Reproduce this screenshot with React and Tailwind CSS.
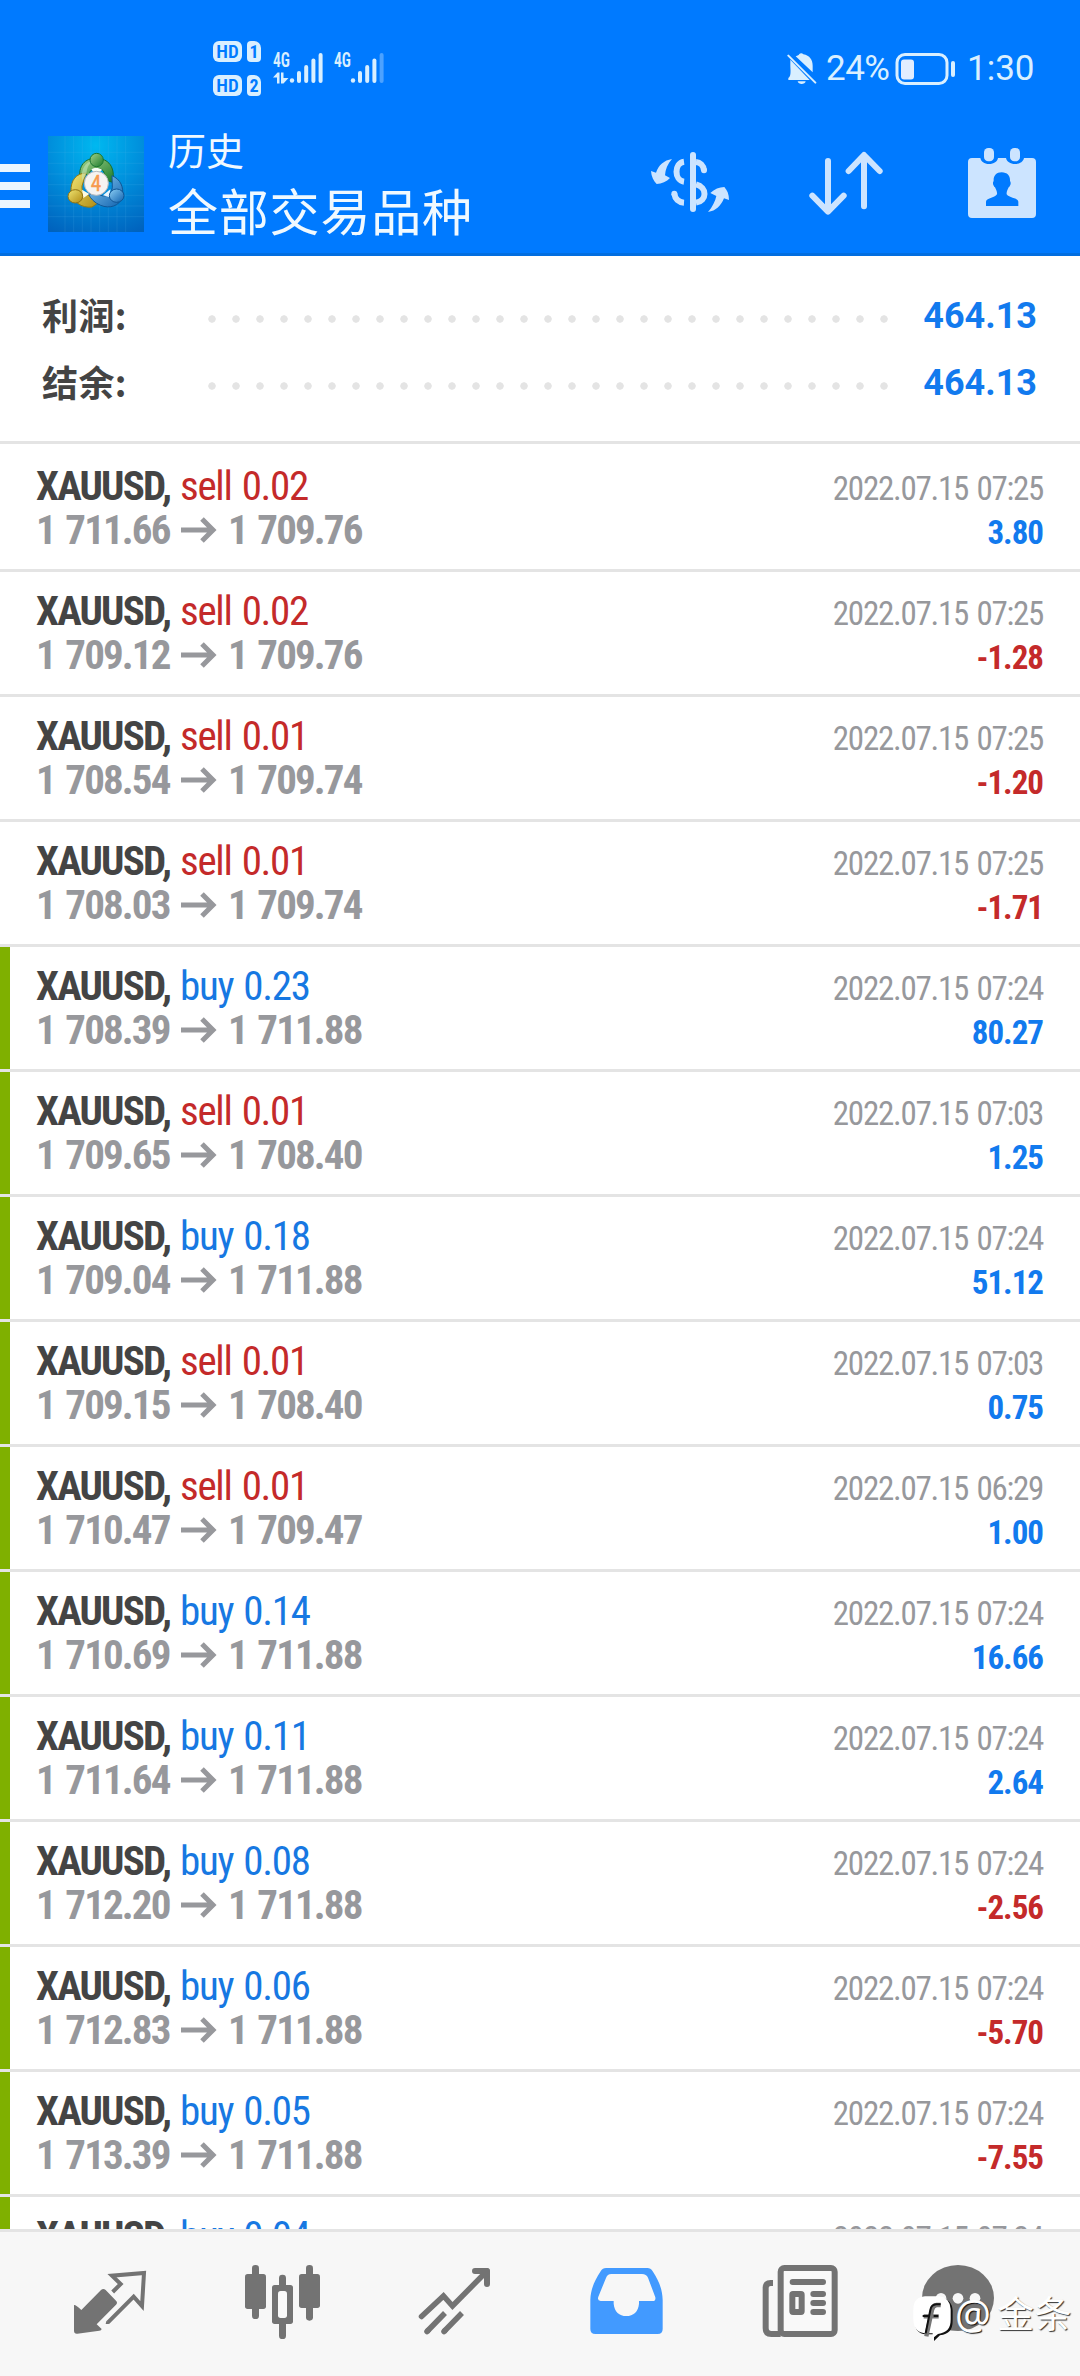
import React from 'react';

const trades = [
  { type: 'sell', lots: '0.02', open: '1 711.66', close: '1 709.76', time: '07:25', profit: '3.80' },
  { type: 'sell', lots: '0.02', open: '1 709.12', close: '1 709.76', time: '07:25', profit: '-1.28' },
  { type: 'sell', lots: '0.01', open: '1 708.54', close: '1 709.74', time: '07:25', profit: '-1.20' },
  { type: 'sell', lots: '0.01', open: '1 708.03', close: '1 709.74', time: '07:25', profit: '-1.71' },
  { type: 'buy', lots: '0.23', open: '1 708.39', close: '1 711.88', time: '07:24', profit: '80.27', tp: true },
  { type: 'sell', lots: '0.01', open: '1 709.65', close: '1 708.40', time: '07:03', profit: '1.25', tp: true },
  { type: 'buy', lots: '0.18', open: '1 709.04', close: '1 711.88', time: '07:24', profit: '51.12', tp: true },
  { type: 'sell', lots: '0.01', open: '1 709.15', close: '1 708.40', time: '07:03', profit: '0.75', tp: true },
  { type: 'sell', lots: '0.01', open: '1 710.47', close: '1 709.47', time: '06:29', profit: '1.00', tp: true },
  { type: 'buy', lots: '0.14', open: '1 710.69', close: '1 711.88', time: '07:24', profit: '16.66', tp: true },
  { type: 'buy', lots: '0.11', open: '1 711.64', close: '1 711.88', time: '07:24', profit: '2.64', tp: true },
  { type: 'buy', lots: '0.08', open: '1 712.20', close: '1 711.88', time: '07:24', profit: '-2.56', tp: true },
  { type: 'buy', lots: '0.06', open: '1 712.83', close: '1 711.88', time: '07:24', profit: '-5.70', tp: true },
  { type: 'buy', lots: '0.05', open: '1 713.39', close: '1 711.88', time: '07:24', profit: '-7.55', tp: true },
  { type: 'buy', lots: '0.04', open: '1 713.90', close: '1 711.88', time: '07:24', profit: '-8.08', tp: true },
];

const SimBadge = ({ n }) => (
  <div className="flex gap-[5px] h-[21px]">
    <span className="w-[29px] rounded-[6px] bg-[#d9efff] text-[#007aff] text-[19px] leading-[21px] font-semibold text-center font-['Roboto_Condensed',sans-serif]">
      HD
    </span>
    <span className="w-[14px] rounded-[4px] rounded-tr-[7px] bg-[#d9efff] text-[#007aff] text-[18px] leading-[21px] font-bold text-center font-['Roboto_Condensed',sans-serif]">
      {n}
    </span>
  </div>
);

const Signal = ({ data, weak }) => (
  <svg className="w-[52px] h-[34px] overflow-visible" viewBox="0 0 52 34" fill="#d9efff">
    <text x="0" y="15" fontSize="19.5" fontWeight="600" textLength="17" lengthAdjust="spacingAndGlyphs" fontFamily="Roboto Condensed">4G</text>
    {data && <path d="M0 25.500L4.500 20.500H6.500V31.500H4V25.500ZM8 20.500H10.500V26H15.500L10.500 31.500H8Z" />}
    <circle cx="19" cy="28.500" r="2.200" />
    <rect x="24" y="19" width="4" height="12" rx="2" />
    <rect x="31.200" y="13" width="4" height="18" rx="2" />
    <rect x="38.400" y="6.500" width="4" height="24.500" rx="2" />
    <rect x="45.600" y="1" width="4" height="30" rx="2" opacity={weak ? 0.35 : 1} />
  </svg>
);

const StatusBar = () => (
  <div className="h-[112px] pt-[40px] pl-[213px] pr-[48px] flex items-start">
    <div className="flex flex-col gap-[13px] pt-[1px]">
      <SimBadge n="1" />
      <SimBadge n="2" />
    </div>
    <div className="flex gap-[9px] ml-[12px] mt-[12px]">
      <Signal data />
      <Signal weak />
    </div>
    <div className="ml-auto mt-[1px] flex items-center h-[56px] text-[#d9efff] text-[35px] font-['Roboto',sans-serif]">
      <svg className="w-[30px] h-[32px] mr-[9px]" viewBox="82 66 90 96" fill="currentColor">
        <path d="M92 86L150 147H86V141C94 137 93 122 92 106Z" />
        <path d="M108 76C114 74 118 72 119 69C122 66 128 66 131 70C150 74 159 86 159 104V124Z" />
        <path d="M114 151H138C136 162 116 162 114 151Z" />
        <path d="M86 74L167 155" stroke="currentColor" strokeWidth="6" strokeLinecap="round" />
      </svg>
      <span className="w-[64px] mt-[1px] tracking-[-0.5px]">24%</span>
      <svg className="w-[61px] h-[34px] ml-[5px]" viewBox="0 0 61 34" fill="none">
        <rect x="2" y="2.500" width="50" height="29" rx="8" stroke="#d9efff" strokeWidth="3" />
        <rect x="6" y="7.500" width="13" height="20" rx="3" fill="#e2edff" />
        <rect x="56" y="9" width="4" height="16" rx="2" fill="#d9efff" />
      </svg>
      <span className="w-[65px] mt-[1px] ml-[11px]">1:30</span>
    </div>
  </div>
);

const AppLogo = () => (
  <svg className="w-24 h-24 ml-[18px]" viewBox="0 0 288 288">
    <defs>
      <radialGradient id="sky" cx=".5" cy=".1" r="1">
        <stop offset="0" stopColor="#00b8f0" />
        <stop offset=".5" stopColor="#008ddb" />
        <stop offset="1" stopColor="#0062bd" />
      </radialGradient>
      <linearGradient id="green" x2="1" y2="1">
        <stop offset="0" stopColor="#a5d38b" />
        <stop offset="1" stopColor="#197a2a" />
      </linearGradient>
      <linearGradient id="gold" x2="1" y2="1">
        <stop offset="0" stopColor="#efe573" />
        <stop offset="1" stopColor="#b08a12" />
      </linearGradient>
      <linearGradient id="blue" x2="1" y2="1">
        <stop offset="0" stopColor="#8ed0f5" />
        <stop offset="1" stopColor="#0e60ae" />
      </linearGradient>
    </defs>
    <rect width="288" height="288" fill="url(#sky)" />
    <path
      d="M51 0V288M77 0V288M103 0V288M129 0V288M155 0V288M181 0V288M207 0V288M233 0V288M0 49H288M0 82H288M0 114H288M0 146H288M0 178H288M0 210H288M0 242H288"
      stroke="#6cc5f3"
      strokeOpacity=".2"
      strokeWidth="2"
    />
    <g strokeWidth="3">
      <path d="M97 134C88 88 112 66 145 67C181 67 203 93 194 139L165 130C174 105 165 98 145 98C126 98 122 109 127 126L111 112Z" fill="url(#green)" stroke="#176f2b" />
      <path d="M114 111C84 112 68 133 69 166C73 197 100 217 132 213L150 201L132 173C116 184 100 172 102 150Z" fill="url(#gold)" stroke="#987a0f" />
      <path d="M192 119C218 130 228 154 223 181C216 211 184 219 158 208C140 201 128 188 121 174L151 173C166 187 190 179 193 155Z" fill="url(#blue)" stroke="#105796" />
      <path d="M102 134C98 98 113 78 132 76C112 96 119 109 112 120Z" fill="#c5e6b7" opacity=".6" />
      <path d="M130 100C138 94 154 95 162 101L157 107H135Z" fill="#f5fff5" />
      <path d="M102 161L124 174L106 186Z" fill="#fffbe0" />
      <path d="M165 178L187 160L186 184Z" fill="#eaf6ff" />
      <circle cx="146" cy="72" r="20" fill="url(#green)" stroke="#1a7730" />
      <ellipse cx="82" cy="181" rx="22" ry="20" fill="url(#gold)" stroke="#8f7212" />
      <ellipse cx="206" cy="179" rx="22" ry="20" fill="url(#blue)" stroke="#0f5595" />
    </g>
    <circle cx="145" cy="142" r="36" fill="#f5f3f2" stroke="#b9b9bd" strokeWidth="3" />
    <text x="144" y="164" textAnchor="middle" fontSize="64" fontWeight="400" fill="#f79a50" stroke="#f79a50" strokeWidth="1" fontFamily="Roboto Condensed">4</text>
  </svg>
);

const Header = () => (
  <header className="h-[256px] shrink-0 bg-[#007aff] border-b-[3px] border-[#026ee0]">
    <StatusBar />
    <div className="h-[144px] flex items-center">
      <div className="w-[30px] flex flex-col gap-[10px] mt-[3px]">
        <div className="h-2 bg-[#ebf6ff]" />
        <div className="h-2 bg-[#ebf6ff]" />
        <div className="h-2 bg-[#ebf6ff]" />
      </div>
      <AppLogo />
      <div className="ml-[24px] -mt-[10px] text-[#f0f9ff] font-['Noto_Sans_CJK_SC',sans-serif]">
        <div className="text-[38px] leading-[60px]">历史</div>
        <div className="text-[50px] leading-[60px] tracking-[0.8px]">全部交易品种</div>
      </div>
      <div className="ml-auto mr-[38px] flex gap-[76px]">
        <svg className="w-20 h-20" viewBox="90 42 240 240" fill="#cce4ff">
          <path d="M219 75V237" stroke="#cce4ff" strokeWidth="18" strokeLinecap="round" />
          <path d="M192 95C162 99 162 151 192 155M163 191C165 207 176 217 192 218M228 96C240 97 250 106 252 121M228 163C262 172 262 212 228 218" fill="none" stroke="#cce4ff" strokeWidth="18" />
          <circle cx="163" cy="191" r="9" />
          <circle cx="252" cy="121" r="9" />
          <path d="M156 87C143 102 136 118 135 136L150 144C140 155 125 161 110 162C101 153 94 140 93 123L108 128C116 105 132 91 156 87Z" />
          <path d="M264 246C277 231 286 214 289 198L271 189C283 177 298 171 313 171C322 181 327 193 327 210L312 205C303 227 288 243 264 246Z" />
        </svg>
        <svg className="w-20 h-20" viewBox="558 42 240 240" fill="none" stroke="#cce4ff" strokeWidth="18" strokeLinecap="round" strokeLinejoin="round">
          <path d="M624 93V243M577 197L624 245L671 197" />
          <path d="M732 229V78M686 123L732 75L779 123" />
        </svg>
        <svg className="w-20 h-20" viewBox="1026 42 240 240" fill="#cce4ff">
          <path
            fillRule="evenodd"
            d="M1056 84H1081C1083 95 1093 102 1107 102C1122 102 1132 95 1134 84H1158C1160 95 1171 102 1185 102C1199 102 1210 95 1212 84H1236Q1248 84 1248 96V252Q1248 264 1236 264H1056Q1044 264 1044 252V96Q1044 84 1056 84ZM1145 127C1128 127 1120 139 1121 153C1116 160 1121 168 1125 172C1129 180 1132 187 1131 193C1124 205 1098 203 1098 216V228H1195V216C1195 203 1168 205 1160 193C1159 187 1162 180 1166 172C1170 168 1175 160 1170 153C1171 139 1163 127 1145 127Z"
          />
          <rect x="1092" y="54" width="30" height="40" rx="13" />
          <rect x="1170" y="54" width="30" height="40" rx="13" />
        </svg>
      </div>
    </div>
  </header>
);

const SummaryRow = ({ label, value }) => (
  <div className="h-[67px] leading-[67px] text-[36px] font-bold flex">
    <span className="w-[158px] -mt-[1px] text-[#444] tracking-[0.4px] font-['Noto_Sans_CJK_SC',sans-serif]">{label}:</span>
    <span className="w-[696px] h-2 mt-[33px] bg-[radial-gradient(circle,#e4e4e4_3.4px,transparent_4px)] bg-[length:24px_8px]" />
    <span className="ml-auto mt-[1px] text-[#127aee] font-['Roboto',sans-serif]">{value}</span>
  </div>
);

const TradeRow = ({ trade }) => {
  const lost = trade.profit.startsWith('-');
  return (
    <li
      className={`h-[125px] shrink-0 flex justify-between border-b-[3px] border-[#e4e4e4] pr-[37px] ${
        trade.tp ? 'bg-[linear-gradient(#7fb000,#7fb000)] bg-[length:10px_100%] bg-no-repeat' : ''
      }`}
    >
      <div className="pl-[36px] pt-[17px] text-[41px] leading-[44px] whitespace-nowrap">
        <div className="flex">
          <span className="w-[144px] font-bold text-[#444] tracking-[-1.8px]">XAUUSD,</span>
          <span
            className={`tracking-[-1.3px] [word-spacing:2px] ${
              trade.type === 'sell' ? 'text-[#c42a2a]' : 'text-[#1778e2]'
            }`}
          >
            {trade.type} {trade.lots}
          </span>
        </div>
        <div className="flex items-center font-bold text-[#97989c] tracking-[-1.9px] [word-spacing:3px]">
          <span className="w-[145px]">{trade.open}</span>
          <svg className="w-[36px] h-[26px] mr-[11px]" viewBox="0 0 36 26" fill="none" stroke="currentColor" strokeWidth="5">
            <path d="M0 13H32M21 2L32 13L21 24" />
          </svg>
          <span>{trade.close}</span>
        </div>
      </div>
      <div className="pt-[20px] text-[33px] leading-[44px] text-right tracking-[-1.25px] [word-spacing:2px] whitespace-nowrap">
        <div className="text-[#97989c]">2022.07.15 {trade.time}</div>
        <div className={`font-bold tracking-[-1px] ${lost ? 'text-[#c42a2a]' : 'text-[#127aee]'}`}>{trade.profit}</div>
      </div>
    </li>
  );
};

const BottomNav = () => (
  <nav className="relative h-[147px] shrink-0 bg-[#f7f7f7] border-t-[3px] border-[#e4e4e4] pt-[30px] pl-[70px] flex gap-[92px] text-[#737373]">
    <svg className="w-20 h-20 shrink-0" viewBox="30 21 240 240" fill="currentColor">
      <path d="M42 150Q46 148 64 165L123 105Q130 99 137 105L168 137Q174 143 168 149L110 208L125 222Q124 227 118 227L52 236Q42 237 42 227Z" />
      <path d="M158 111L182 87L156 62L252 54L246 153L221 125L144 202" fill="none" stroke="currentColor" strokeWidth="12" />
      <path d="M139 198L151 202L146 207H137Z" />
    </svg>
    <svg className="w-20 h-20 shrink-0" viewBox="543 21 240 240" fill="currentColor">
      <rect x="573" y="30" width="21" height="162" rx="10" />
      <rect x="552" y="57" width="63" height="105" rx="8" />
      <rect x="735" y="30" width="21" height="167" rx="10" />
      <rect x="714" y="57" width="63" height="102" rx="8" />
      <rect x="654" y="59" width="21" height="60" rx="10" />
      <rect x="654" y="190" width="21" height="62" rx="10" />
      <rect x="633" y="90" width="63" height="117" rx="8" />
      <rect x="651" y="108" width="27" height="81" rx="8" fill="#f9f9f9" />
    </svg>
    <svg className="w-20 h-20 shrink-0" viewBox="0 0 80 80" fill="none" stroke="currentColor" strokeWidth="5.500">
      <path d="M7.500 54.500L29.500 34L38.500 44L73 9" strokeLinecap="round" />
      <path d="M61 9H73V22" strokeLinecap="round" strokeLinejoin="round" strokeWidth="6" />
      <path d="M13 69.500L31 51M30 69.500L48 51" />
      <path d="M13 69.500L14 68.500M30 69.500L31 68.500" strokeLinecap="round" />
    </svg>
    <svg className="w-20 h-20 shrink-0" viewBox="48 21 240 240">
      <path d="M108 39H232Q242 39 248 49C267 79 277 102 278 135V222Q278 237 263 237H76Q61 237 61 222V135C62 102 73 79 92 49Q98 39 108 39Z" fill="#429aff" />
      <path d="M124 57H216Q229 57 234 68L256 127Q258 138 248 138H207V146C205 170 190 183 169 183C148 183 133 170 131 146V138H92Q81 137 85 125L108 69Q112 57 124 57Z" fill="#f7f7f7" />
    </svg>
    <svg className="w-20 h-20 shrink-0 ml-[2px]" viewBox="570 21 240 240" fill="none" stroke="currentColor" strokeWidth="18">
      <rect x="632" y="39" width="162" height="198" rx="11" fill="#f9f9f9" />
      <path d="M609 84H602Q587 84 587 98V219Q587 237 604 237H632" />
      <path d="M668 81H759M730 117H759M730 144H759M730 171H759" strokeLinecap="round" />
      <rect x="667" y="117" width="28" height="54" rx="2" />
    </svg>
    <svg className="w-20 h-20 shrink-0 -ml-[14px]" viewBox="54 21 240 240" fill="currentColor">
      <ellipse cx="174" cy="129" rx="108" ry="99" />
      <g fill="#f7f7f7">
        <circle cx="123" cy="130" r="16" />
        <circle cx="174" cy="130" r="16" />
        <circle cx="225" cy="130" r="16" />
      </g>
    </svg>
    <div className="absolute left-[913px] top-[64px] flex text-white whitespace-nowrap">
      <svg className="w-[40px] h-[48px]" viewBox="39 123 120 144">
        <path d="M75 126H120Q154 130 156 165V195C156 223 145 234 118 239L100 256V239L106 236H75Q42 233 42 195V165Q42 129 75 126Z" fill="#111" transform="translate(2 2)" />
        <path d="M75 124H118Q150 128 152 163V193C152 221 142 232 114 237L98 250V235H75Q40 231 40 193V163Q40 127 75 124Z" fill="#fff" />
        <path d="M122 150H110Q99 151 96 165L79 244M71 184H116" fill="none" stroke="#777" strokeWidth="13" />
        <path d="M122 148H109Q94 149 91 165L77 235M68 183H88M101 183H115" fill="none" stroke="#111" strokeWidth="6" />
      </svg>
      <span className="w-[42px] ml-[2px] -mt-[4px] text-[40px] leading-[44px] [text-shadow:1px_1px_1px_#111] font-['Noto_Sans','Noto_Sans_CJK_SC',sans-serif]">@</span>
      <span className="-mt-[7px] text-[37px] leading-[46px] tracking-[0.5px] [text-shadow:1px_1px_1px_#333] font-['Noto_Sans_CJK_SC',sans-serif]">金条</span>
    </div>
  </nav>
);

export default function App() {
  return (
    <div className="w-[1080px] h-[2376px] flex flex-col overflow-hidden bg-white">
      <Header />
      <section className="h-[188px] shrink-0 pt-[26px] pl-[42px] pr-[43px] border-b-[3px] border-[#e4e4e4]">
        <SummaryRow label="利润" value="464.13" />
        <SummaryRow label="结余" value="464.13" />
      </section>
      <ul className="flex-1 min-h-0 overflow-hidden flex flex-col pt-[3px] font-['Roboto_Condensed',sans-serif]">
        {trades.map((trade, i) => (
          <TradeRow key={i} trade={trade} />
        ))}
      </ul>
      <BottomNav />
    </div>
  );
}
